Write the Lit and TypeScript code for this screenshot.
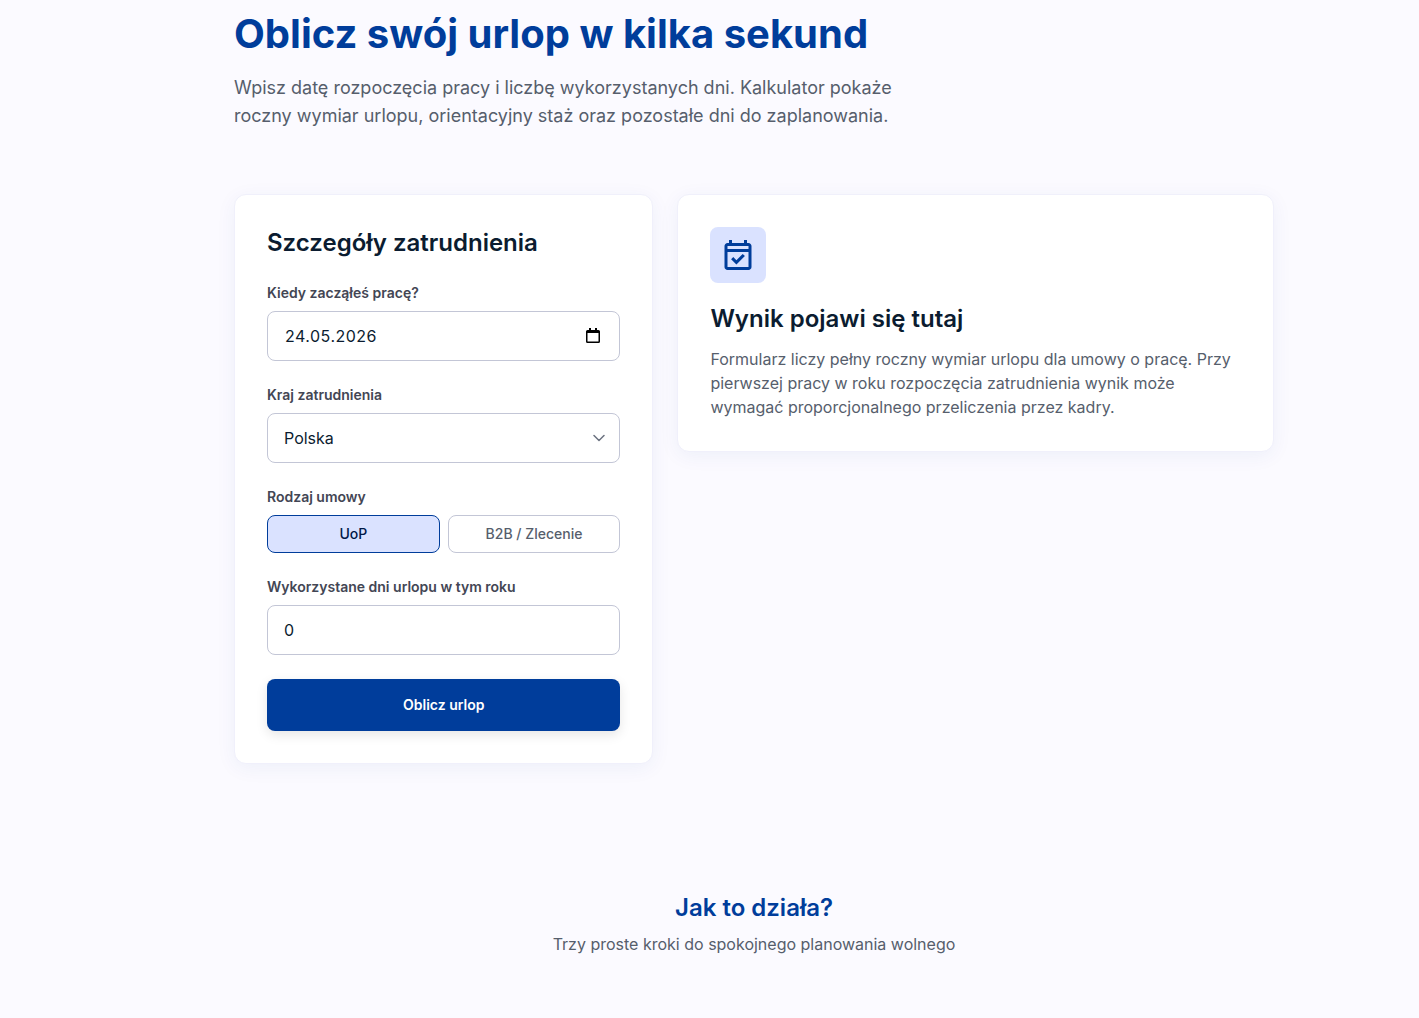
import { LitElement, html, css } from "lit";
import { customElement } from "lit/decorators.js";

@customElement("app-root")
export class AppRoot extends LitElement {
  static styles = css`
    :host { display: block; min-height: 1018px; background: #fbfaff; font-family: Inter, "Liberation Sans", sans-serif; color: #0b1c30; text-rendering: optimizeLegibility; }
    * { box-sizing: border-box; }
    .page { width: 1040px; margin-left: 234px; padding-top: 10px; }
    h1 { margin: 0; font-size: 40px; line-height: 48px; font-weight: 700; color: #003d9b; }
    .lead { margin: 16px 0 0; width: 672px; font-size: 18px; line-height: 28px; color: #565e6c; }
    .grid { display: grid; grid-template-columns: 419.4px 1fr; gap: 24px; align-items: start; margin-top: 64px; }
    .card { background: #fff; border: 1px solid #f0f0fb; border-radius: 12px; padding: 32px; box-shadow: 0 4px 20px rgba(0, 61, 155, 0.06); }
    h2 { margin: 0; font-size: 24px; line-height: 32px; font-weight: 600; color: #0b1c30; }
    .field { margin-top: 24px; }
    .lbl { display: block; font-size: 14px; line-height: 20px; font-weight: 600; color: #434654; margin-bottom: 8px; }
    .control { display: flex; align-items: center; justify-content: space-between; height: 50px; border: 1px solid #c3c6d6; border-radius: 8px; background: #fff; padding: 0 16px; font-size: 16px; color: #0b1c30; }
    .date { letter-spacing: 0.5px; padding-left: 17px; padding-right: 19px; }
    .control svg { display: block; flex: none; }
    .chev { margin-right: -2px; }
    .toggle { display: grid; grid-template-columns: 1fr 1fr; gap: 8px; }
    .toggle button { height: 38px; border-radius: 8px; border: 1px solid #c3c6d6; background: #fff; font: 500 14px/18px Inter, "Liberation Sans", sans-serif; color: #565e6c; padding: 0 0 1px; }
    .toggle button.on { background: #dae2ff; border-color: #003d9b; color: #001848; }
    .submit { display: block; width: 100%; height: 52px; margin-top: 24px; border: 0; border-radius: 8px; background: #003d9b; color: #fff; font: 600 14px/18px Inter, "Liberation Sans", sans-serif; padding: 0 0 1px; box-shadow: 0 4px 12px rgba(0, 0, 0, 0.1); }
    .badge { width: 56px; height: 56px; border-radius: 8px; background: #dae2ff; display: flex; align-items: center; justify-content: center; }
    .result h2 { margin-top: 20px; }
    .result p { margin: 12px 0 0; font-size: 16px; line-height: 24px; color: #565e6c; }
    .how { margin-top: 128px; text-align: center; }
    .how h3 { margin: 0; font-size: 24px; line-height: 32px; font-weight: 600; color: #003d9b; }
    .how p { margin: 8px 0 0; font-size: 16px; line-height: 24px; color: #565e6c; }
  `;

  render() {
    return html`
      <div class="page">
        <h1>Oblicz swój urlop w kilka sekund</h1>
        <p class="lead">Wpisz datę rozpoczęcia pracy i liczbę wykorzystanych dni. Kalkulator pokaże roczny wymiar urlopu, orientacyjny staż oraz pozostałe dni do zaplanowania.</p>
        <div class="grid">
          <section class="card form">
            <h2>Szczegóły zatrudnienia</h2>
            <div class="field">
              <div class="lbl">Kiedy zacząłeś pracę?</div>
              <div class="control date">
                <span>24.05.2026</span>
                <svg width="14" height="16" viewBox="0 0 14 16"><path fill="#000" d="M3 0h2v2h4V0h2v2h1.500A1.500 1.500 0 0 1 14 3.500v10a1.500 1.500 0 0 1-1.500 1.500h-11A1.500 1.500 0 0 1 0 13.500v-10A1.500 1.500 0 0 1 1.500 2H3V0Zm-1.500 5v8.500h11V5h-11Z"/></svg>
              </div>
            </div>
            <div class="field">
              <div class="lbl">Kraj zatrudnienia</div>
              <div class="control">
                <span>Polska</span>
                <svg class="chev" width="12" height="8" viewBox="0 0 12 8"><path d="M1 1.500 6 6.500l5-5" fill="none" stroke="#6b7280" stroke-width="1.500" stroke-linecap="round" stroke-linejoin="round"/></svg>
              </div>
            </div>
            <div class="field">
              <div class="lbl">Rodzaj umowy</div>
              <div class="toggle">
                <button class="on">UoP</button>
                <button>B2B / Zlecenie</button>
              </div>
            </div>
            <div class="field">
              <div class="lbl">Wykorzystane dni urlopu w tym roku</div>
              <div class="control"><span>0</span></div>
            </div>
            <button class="submit">Oblicz urlop</button>
          </section>
          <section class="card result">
            <div class="badge">
              <svg width="36" height="36" viewBox="0 -960 960 960"><path fill="#003d9b" d="M438-226 296-368l58-58 84 84 168-168 58 58-226 226ZM200-80q-33 0-56.500-23.500T120-160v-560q0-33 23.500-56.500T200-800h40v-80h80v80h320v-80h80v80h40q33 0 56.500 23.500T840-720v560q0 33-23.500 56.500T760-80H200Zm0-80h560v-400H200v400Zm0-480h560v-80H200v80Zm0 0v-80 80Z"/></svg>
            </div>
            <h2>Wynik pojawi się tutaj</h2>
            <p>Formularz liczy pełny roczny wymiar urlopu dla umowy o pracę. Przy pierwszej pracy w roku rozpoczęcia zatrudnienia wynik może wymagać proporcjonalnego przeliczenia przez kadry.</p>
          </section>
        </div>
        <section class="how">
          <h3>Jak to działa?</h3>
          <p>Trzy proste kroki do spokojnego planowania wolnego</p>
        </section>
      </div>
    `;
  }
}
